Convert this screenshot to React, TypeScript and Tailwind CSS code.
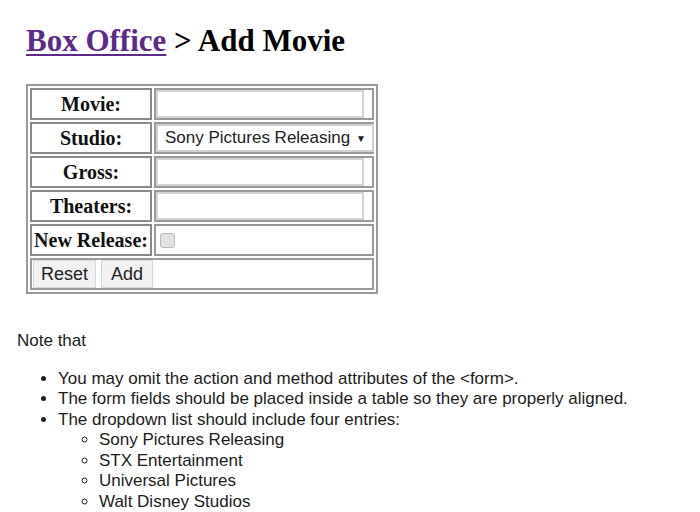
const labels = ["Movie:", "Studio:", "Gross:", "Theaters:", "New Release:"];
const studios = [
  "Sony Pictures Releasing",
  "STX Entertainment",
  "Universal Pictures",
  "Walt Disney Studios",
];

function Field({ label }: { label: string }) {
  if (label === "Studio:") {
    return (
      <div className="flex h-[28px] w-[218px] items-center justify-between border-2 border-[#d0d0d0] bg-white pl-[7px] pr-[6px] text-[17px] whitespace-nowrap text-[#222] [font-family:'Liberation_Sans',Arial,sans-serif]">
        <span>{studios[0]}</span>
        <span className="text-[10px]">▼</span>
      </div>
    );
  }
  if (label === "New Release:") {
    return (
      <div className="ml-[4px] h-[15px] w-[15px] rounded-[3px] border border-[#b8b8b8] bg-[#e2e2e2]" />
    );
  }
  return <div className="h-[28px] w-[208px] border-2 border-[#d4d4d4] bg-white" />;
}

export default function App() {
  return (
    <div className="min-h-[512px] w-[700px] bg-white [font-family:'Liberation_Serif','Times_New_Roman',serif]">
      <h1 className="pl-[26px] pt-[23px] text-[31px] leading-[36px] font-bold text-black">
        <a href="#" className="text-[#5b2a8c] underline decoration-2 underline-offset-[3px]">
          Box Office
        </a>{" "}
        &gt; Add Movie
      </h1>

      <div className="ml-[26px] mt-[25px] w-[352px] border-2 border-[#9a9a9a]">
        <table className="w-full table-fixed border-separate border-spacing-[2px]">
          <colgroup>
            <col className="w-[122px]" />
            <col />
          </colgroup>
          <tbody>
            {labels.map((label) => (
              <tr key={label}>
                <th className="h-[32px] border-2 border-[#8a8a8a] p-0 text-center text-[20px] leading-none font-bold whitespace-nowrap text-[#111]">
                  {label}
                </th>
                <td className="h-[32px] border-2 border-[#9a9a9a] p-0 align-middle">
                  <Field label={label} />
                </td>
              </tr>
            ))}
            <tr>
              <td colSpan={2} className="h-[32px] border-2 border-[#9a9a9a] p-0">
                <div className="flex gap-[5px] pl-[1px] [font-family:'Liberation_Sans',Arial,sans-serif] text-[18px] text-[#222]">
                  <button className="h-[28px] border border-[#d8d8d8] bg-[#f1f1f1] px-[7px]">Reset</button>
                  <button className="h-[28px] border border-[#d8d8d8] bg-[#f1f1f1] px-[9px]">Add</button>
                </div>
              </td>
            </tr>
          </tbody>
        </table>
      </div>

      <div className="[font-family:'Liberation_Sans',Arial,sans-serif] text-[17px] leading-[20.5px] text-[#1c1c1c]">
        <p className="mt-[37px] pl-[17px]">Note that</p>
        <ul className="mt-[17px] list-disc pl-[58px]">
          <li>You may omit the action and method attributes of the &lt;form&gt;.</li>
          <li>The form fields should be placed inside a table so they are properly aligned.</li>
          <li>
            The dropdown list should include four entries:
            <ul className="list-[circle] pl-[41px]">
              {studios.map((s) => (
                <li key={s}>{s}</li>
              ))}
            </ul>
          </li>
        </ul>
      </div>
    </div>
  );
}
